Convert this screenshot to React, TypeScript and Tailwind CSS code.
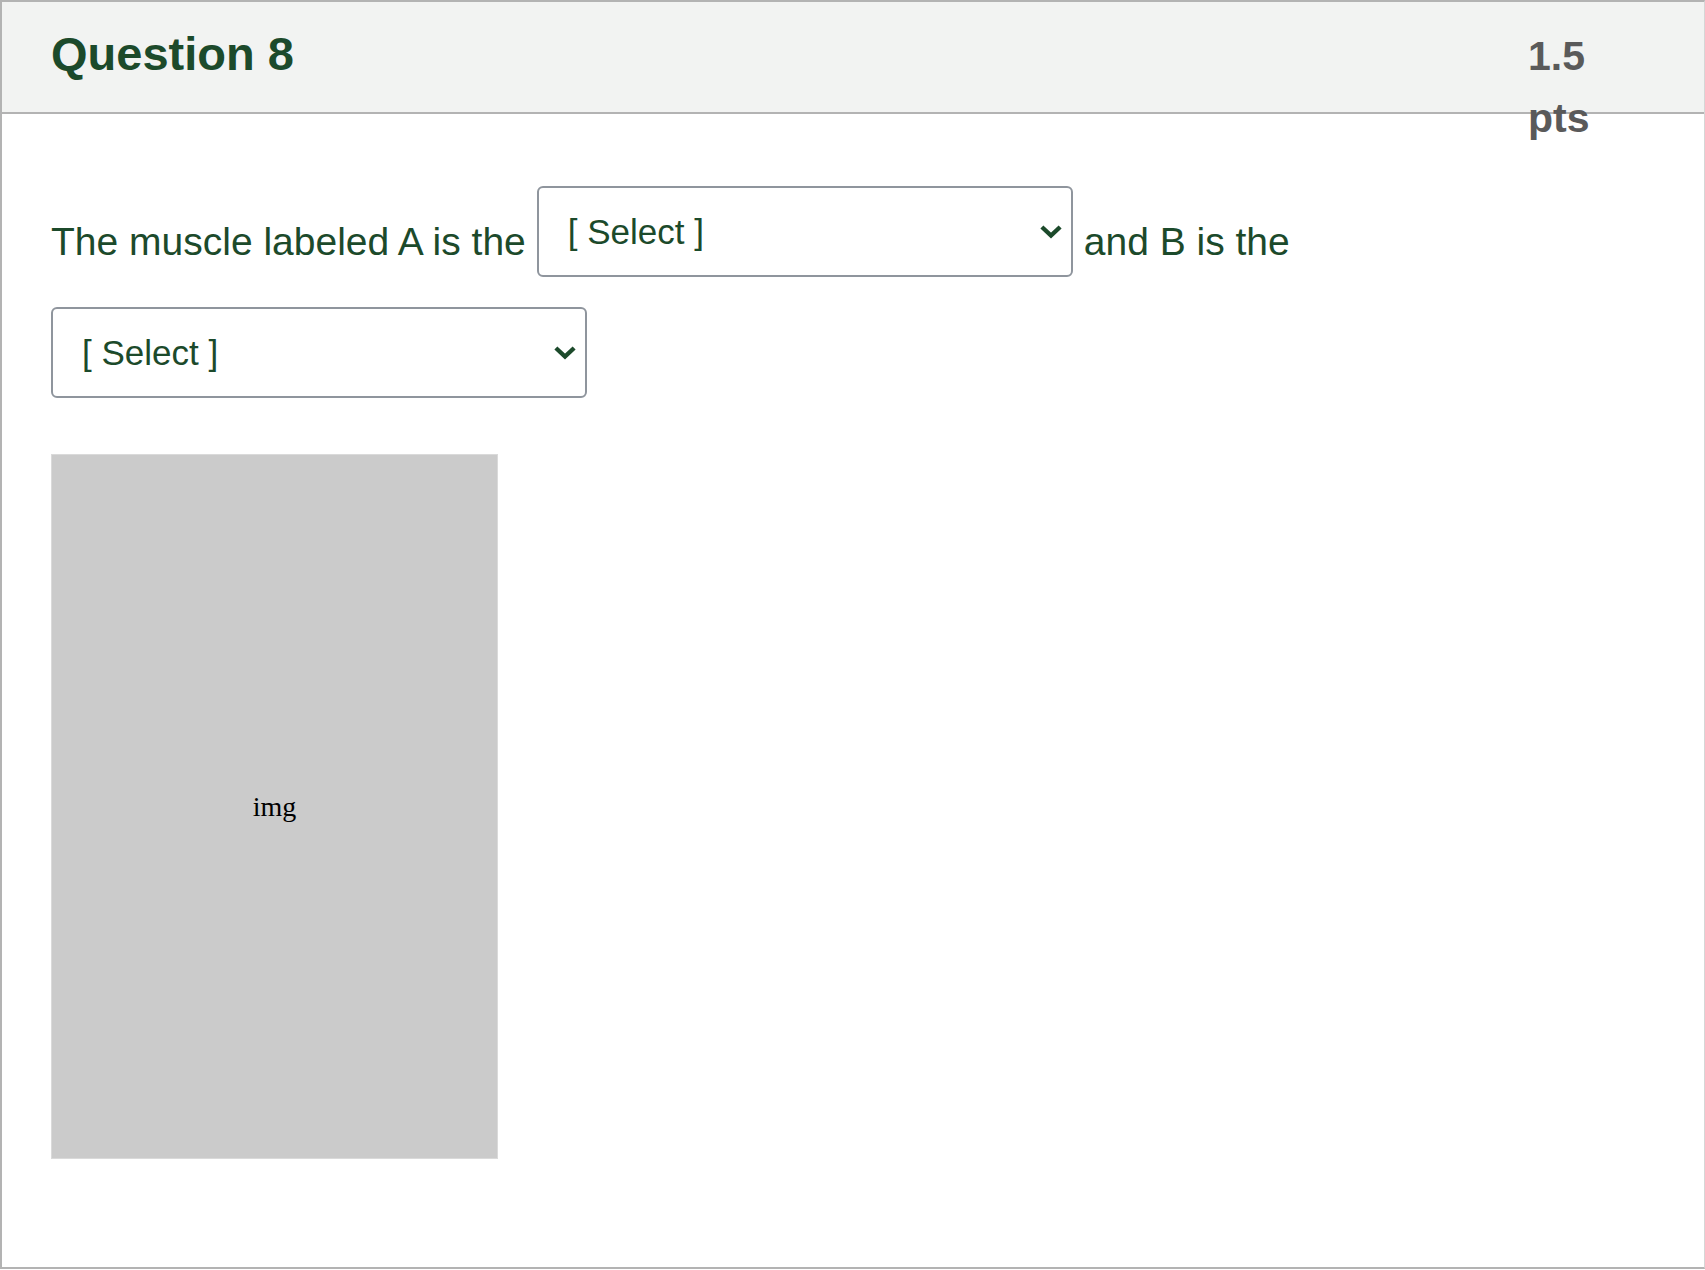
import React from "react";

const green = "text-[#1c4a2b]";

function Chevron() {
  return (
    <svg width="22" height="14" viewBox="0 0 22 14" className="shrink-0">
      <path
        d="M3.5 3.5 L11 10.5 L18.5 3.5"
        fill="none"
        stroke="#1c4a2b"
        strokeWidth="4.4"
        strokeLinecap="square"
        strokeLinejoin="miter"
      />
    </svg>
  );
}

function FakeSelect() {
  return (
    <div className="w-[536px] h-[91px] shrink-0 border-2 border-[#8f959d] rounded-[6px] bg-white flex items-center pl-[29px] pr-[9px]">
      <span className={`flex-1 text-[35px] leading-none ${green}`}>[ Select ]</span>
      <Chevron />
    </div>
  );
}

export default function App() {
  return (
    <div
      className="w-full bg-white border-t-2 border-l-2 border-b-2 border-r border-t-[#b3b3b3] border-l-[#b3b3b3] border-b-[#b3b3b3] border-r-[#d6d6d6]"
      style={{ fontFamily: '"Liberation Sans", Arial, sans-serif' }}
    >
      <div className="h-[112px] bg-[#f2f3f2] border-b-2 border-[#b3b3b3] flex items-start justify-between pl-[49px] pr-[76px]">
        <h2 className={`mt-[17px] text-[47px] leading-[1.5] font-bold ${green}`}>Question 8</h2>
        <div className="mt-[24px] w-[100px] text-[41px] leading-[1.5] font-bold text-[#5a5a5a]">
          1.5 pts
        </div>
      </div>
      <div className="px-[49px] pt-[72px] pb-[108px]">
        <div className={`flex flex-wrap items-start gap-x-[11px] gap-y-[30px] text-[39px] leading-[1.5] ${green}`}>
          <span className="mt-[27px]">The muscle labeled A is the</span>
          <FakeSelect />
          <span className="mt-[27px]">and B is the</span>
          <FakeSelect />
        </div>
        <div className="mt-[56px] w-[447px] h-[705px] bg-[#cbcbcb] border border-[#dadada] flex items-center justify-center">
          <span
            className="text-[28px] text-black"
            style={{ fontFamily: '"Liberation Serif", "Times New Roman", serif' }}
          >
            img
          </span>
        </div>
      </div>
    </div>
  );
}
